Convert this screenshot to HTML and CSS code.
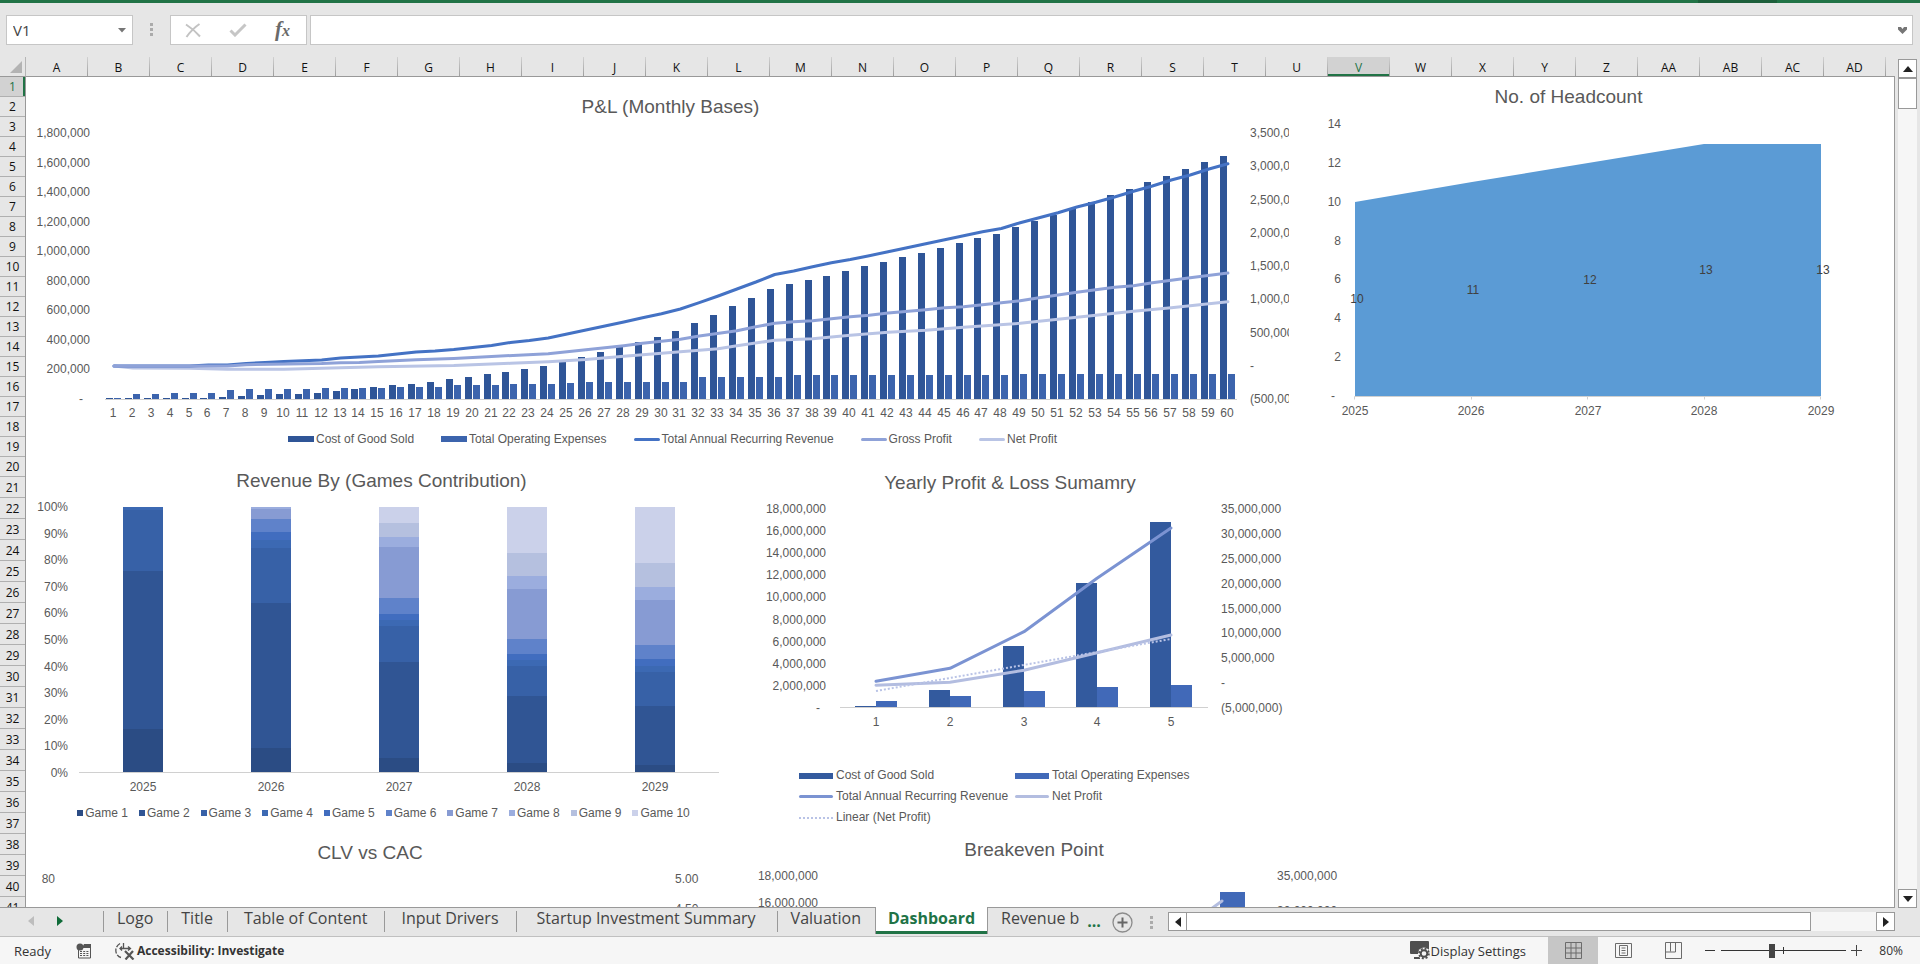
FILE: index.html
```html
<!DOCTYPE html>
<html lang="en">
<head>
<meta charset="utf-8">
<title>Dashboard</title>
<link rel="stylesheet" href="styles.css">
</head>
<body>
<div class="ribbon-edge"><span class="ribbon-notch"></span></div>

<header class="formula-row">
  <div class="name-box">
    <input class="name-input" type="text" value="V1" aria-label="Name box">
    <button class="icon-button" type="button" aria-label="Open name list">
      <svg width="8" height="5" viewBox="0 0 8 5"><path d="M0 0h8L4 4.500z" fill="#767676"/></svg>
    </button>
  </div>
  <svg class="grip" width="3" height="13" viewBox="0 0 3 13" fill="#ababab"><path d="M0 0h3v3H0zM0 5h3v3H0zM0 10h3v3H0z"/></svg>
  <div class="formula-actions">
    <button class="icon-button" type="button" aria-label="Cancel">
      <svg width="16" height="15" viewBox="0 0 16 15" fill="none" stroke="#c3c3c3" stroke-width="2"><path d="M1 1.500C5 4 11 9 15 13.500M14.500 1C10 4 5 9 1.500 14"/></svg>
    </button>
    <button class="icon-button" type="button" aria-label="Enter">
      <svg width="18" height="14" viewBox="0 0 18 14" fill="none" stroke="#c6c6c6" stroke-width="3"><path d="M1.500 7.500L6 12 16.500 1.500"/></svg>
    </button>
    <button class="icon-button fx" type="button" aria-label="Insert function"><i>f</i><i class="fx-x">x</i></button>
  </div>
  <div class="formula-field">
    <input class="formula-input" type="text" aria-label="Formula bar">
    <button class="icon-button" type="button" aria-label="Expand formula bar">
      <svg width="9" height="7" viewBox="0 0 9 7"><path d="M0 0h3l1.500 2L6 0h3v2.500L4.500 7 0 2.500z" fill="#767676"/></svg>
    </button>
  </div>
</header>

<main class="workspace">
  <div class="sheet">
    <div class="corner"><svg width="12" height="12" viewBox="0 0 12 12"><path d="M12 0v12H0z" fill="#b3b3b3"/></svg></div>
    <div class="column-heads" id="column-heads"></div>
    <div class="row-heads" id="row-heads"></div>
    <div class="canvas">
      <div class="chart-row chart-row-top">
        <div class="chart-clip">
          <figure class="chart chart-monthly">
            <figcaption>P&amp;L (Monthly Bases)</figcaption>
            <svg id="monthly" width="1287" height="305" viewBox="27 119 1287 305"></svg>
            <ul class="legend">
              <li><span class="key key-bar c-monthly-cost"></span>Cost of Good Sold</li>
              <li><span class="key key-bar c-monthly-opex"></span>Total Operating Expenses</li>
              <li><span class="key key-line c-monthly-revenue"></span>Total Annual Recurring Revenue</li>
              <li><span class="key key-line c-monthly-gross"></span>Gross Profit</li>
              <li><span class="key key-line c-monthly-net"></span>Net Profit</li>
            </ul>
          </figure>
        </div>
        <figure class="chart chart-headcount">
          <figcaption>No. of Headcount</figcaption>
          <svg id="headcount" width="559" height="320" viewBox="1289 109 559 320"></svg>
        </figure>
      </div>
      <div class="chart-row chart-row-middle">
        <figure class="chart chart-games">
          <figcaption>Revenue By (Games Contribution)</figcaption>
          <svg id="games" width="709" height="308" viewBox="27 493 709 308"></svg>
          <ul class="legend legend-games" id="games-legend"></ul>
        </figure>
        <figure class="chart chart-yearly">
          <figcaption>Yearly Profit &amp; Loss Sumamry</figcaption>
          <svg id="yearly" width="548" height="240" viewBox="736 495 548 240"></svg>
          <ul class="legend legend-yearly">
            <li><span class="key key-bar c-yearly-cost"></span>Cost of Good Sold</li>
            <li><span class="key key-bar c-yearly-opex"></span>Total Operating Expenses</li>
            <li><span class="key key-line c-yearly-revenue"></span>Total Annual Recurring Revenue</li>
            <li><span class="key key-line c-yearly-net"></span>Net Profit</li>
            <li><span class="key key-dots"></span>Linear (Net Profit)</li>
          </ul>
        </figure>
      </div>
      <div class="chart-row">
        <figure class="chart chart-clv">
          <figcaption>CLV vs CAC</figcaption>
          <svg id="clv" width="686" height="60" viewBox="27 865 686 60"></svg>
        </figure>
        <figure class="chart chart-breakeven">
          <figcaption>Breakeven Point</figcaption>
          <svg id="breakeven" width="642" height="60" viewBox="713 862 642 60"></svg>
        </figure>
      </div>
    </div>
  </div>
  <div class="vscroll">
    <button class="scroll-button" type="button" aria-label="Scroll up"><svg width="10" height="6" viewBox="0 0 10 6"><path d="M5 0l5 6H0z" fill="#222"/></svg></button>
    <div class="vthumb"></div>
    <button class="scroll-button scroll-end" type="button" aria-label="Scroll down"><svg width="10" height="6" viewBox="0 0 10 6"><path d="M0 0h10L5 6z" fill="#222"/></svg></button>
  </div>
</main>

<nav class="tab-bar" aria-label="Sheets">
  <div class="tab-arrows">
    <button class="icon-button" type="button" aria-label="Previous sheet"><svg width="6" height="10" viewBox="0 0 6 10"><path d="M6 0v10L0 5z" fill="#bdbdbd"/></svg></button>
    <button class="icon-button" type="button" aria-label="Next sheet"><svg width="6" height="10" viewBox="0 0 6 10"><path d="M0 0l6 5-6 5z" fill="#0f6b38"/></svg></button>
  </div>
  <div class="tabs">
    <button class="tab" type="button">Logo</button>
    <button class="tab" type="button">Title</button>
    <button class="tab tab-long" type="button">Table of Content</button>
    <button class="tab tab-long" type="button">Input Drivers</button>
    <button class="tab tab-wide" type="button">Startup Investment Summary</button>
    <button class="tab" type="button">Valuation</button>
    <button class="tab tab-active" type="button" aria-current="page">Dashboard</button>
    <button class="tab tab-cut" type="button">Revenue b</button>
    <button class="tab-more" type="button" aria-label="More sheets">...</button>
  </div>
  <button class="icon-button add-sheet" type="button" aria-label="New sheet">
    <svg width="21" height="21" viewBox="0 0 21 21" fill="none"><circle cx="10.500" cy="10.500" r="9.500" stroke="#8c8c8c" stroke-width="1.300"/><path d="M10.500 5.500v10M5.500 10.500h10" stroke="#666" stroke-width="2"/></svg>
  </button>
  <svg class="grip tab-grip" width="3" height="13" viewBox="0 0 3 13" fill="#ababab"><path d="M0 0h3v3H0zM0 5h3v3H0zM0 10h3v3H0z"/></svg>
  <div class="hscroll">
    <button class="scroll-button" type="button" aria-label="Scroll left"><svg width="6" height="10" viewBox="0 0 6 10"><path d="M6 0v10L0 5z" fill="#222"/></svg></button>
    <div class="hthumb"></div>
    <button class="scroll-button scroll-end" type="button" aria-label="Scroll right"><svg width="6" height="10" viewBox="0 0 6 10"><path d="M0 0l6 5-6 5z" fill="#222"/></svg></button>
  </div>
</nav>

<footer class="status-bar">
  <span class="ready">Ready</span>
  <button class="icon-button macro" type="button" aria-label="Record macro">
    <svg width="16" height="16" viewBox="0 0 16 16"><path d="M2.500 6v9h12V3" fill="none" stroke="#555"/><path d="M8 1h7v4H6z" fill="#555"/><circle cx="4" cy="4" r="3.500" fill="#555"/><path d="M4 8.500h9M4 10.500h9M4 12.500h9" stroke="#555" stroke-dasharray="2 1.200"/></svg>
  </button>
  <button class="status-button accessibility" type="button">
    <svg width="20" height="18" viewBox="0 0 20 18" fill="none" stroke="#555" stroke-width="1.300"><path d="M5 1.500C1 4 0 8 1.500 11.500c1 2.200 2.500 3.500 4.500 4" stroke-dasharray="5 1.500"/><path d="M8.500 1v5M5 6.500h10M13 4.500l2.500 2-2.500 2M7 4.500l-2 2 2 2"/><path d="M10 9l8.500 8.500M18 9l-7.500 8.500" stroke-width="2.200"/></svg>
    Accessibility: Investigate
  </button>
  <span class="spacer"></span>
  <button class="status-button display" type="button">
    <svg width="20" height="19" viewBox="0 0 20 19"><path d="M1 0h14a1 1 0 0 1 1 1v12H1a1 1 0 0 1-1-1V1a1 1 0 0 1 1-1zM4 16h6v2H4z" fill="#4f4f4f"/><path d="M1 0h17a1 1 0 0 1 1 1v9H1z" fill="#4f4f4f"/><circle cx="14" cy="12.500" r="6" fill="#f6f6f6"/><circle cx="14" cy="12.500" r="3.300" fill="none" stroke="#4f4f4f" stroke-width="2"/><circle cx="14" cy="12.500" r="4.900" fill="none" stroke="#4f4f4f" stroke-width="1.800" stroke-dasharray="2 1.850"/></svg>
    Display Settings
  </button>
  <button class="view view-on" type="button" aria-label="Normal view">
    <svg width="17" height="17" viewBox="0 0 17 17" fill="none" stroke="#6b6b6b"><path d="M.5.5h16v16H.5zM6 .5v16M11 .5v16M.5 6h16M.5 11h16"/></svg>
  </button>
  <button class="view" type="button" aria-label="Page layout">
    <svg width="17" height="17" viewBox="0 0 17 17" fill="none" stroke="#6b6b6b"><path d="M.5 1.500h16v14H.5zM4.500 3.500h8v10h-8zM6.500 6h4M6.500 8.500h4M6.500 11h4"/></svg>
  </button>
  <button class="view" type="button" aria-label="Page break preview">
    <svg width="17" height="17" viewBox="0 0 17 17" fill="none" stroke="#6b6b6b"><path d="M.5.5h16v16H.5zM5.500.5v9M10.500.5v9.500H.5"/></svg>
  </button>
  <button class="icon-button zoom-out" type="button" aria-label="Zoom out"><svg width="10" height="11" viewBox="0 0 10 11"><path d="M0 5.500h10" stroke="#333"/></svg></button>
  <input class="zoom-slider" type="range" min="0" max="100" value="40" aria-label="Zoom">
  <button class="icon-button" type="button" aria-label="Zoom in"><svg width="11" height="11" viewBox="0 0 11 11"><path d="M0 5.500h11M5.500 0v11" stroke="#444"/></svg></button>
  <span class="zoom-value">80%</span>
</footer>
<script src="charts.js"></script>
</body>
</html>
```
FILE: styles.css
```css
* { box-sizing: border-box; }

body {
  margin: 0;
  height: 100vh;
  padding-bottom: 2px;
  display: flex;
  flex-direction: column;
  overflow: hidden;
  background: #fff;
  color: #444;
  font-family: "Open Sans", "Noto Sans", sans-serif;
  font-size: 12px;
}

button, input { font: inherit; color: inherit; }
button { border: 0; padding: 0; background: none; }
figure, ul { margin: 0; padding: 0; }
ul { list-style: none; }
svg { display: block; flex: none; }

.ribbon-edge { flex: none; height: 3px; background: #217346; display: flex; justify-content: flex-end; }
.ribbon-notch { width: 79px; margin-right: 143px; background: #1d5f3b; }

/* Formula bar */
.formula-row {
  flex: none;
  height: 54px;
  padding: 12px 7px 12px 6px;
  display: flex;
  background: #e6e6e6;
}
.name-box, .formula-actions, .formula-field {
  display: flex;
  align-items: center;
  background: #fff;
  border: 1px solid #c6c6c6;
}
.name-box { width: 127px; padding-right: 6px; }
.name-input, .formula-input { flex: 1; min-width: 0; border: 0; outline: 0; background: none; }
.name-input { padding: 0 0 0 6px; font-size: 15px; }
.icon-button { display: flex; align-items: center; justify-content: center; }
.grip { margin: 8px 17px 0; }
.formula-actions { width: 137px; padding: 0 16px 0 14px; justify-content: space-between; margin-right: 3px; }
.fx { font-family: "Liberation Serif", serif; font-size: 21px; font-weight: 700; line-height: 24px; color: #6a6a6a; align-items: baseline; }
.fx-x { font-size: 16px; }
.formula-field { flex: 1; padding-right: 5px; }

/* Grid */
.workspace { flex: 1; min-height: 0; display: flex; background: #e6e6e6; }
.sheet {
  flex: 1;
  min-width: 0;
  display: grid;
  grid-template-columns: 26px minmax(0, 1fr);
  grid-template-rows: 20px minmax(0, 1fr);
  border-bottom: 1px solid #999;
}
.corner {
  display: flex;
  justify-content: flex-end;
  align-items: flex-end;
  padding: 0 3px 3px 0;
  border-right: 1px solid #b5b5b5;
  border-bottom: 1px solid #999;
}
.column-heads { display: flex; overflow: hidden; border-bottom: 1px solid #999; }
.column-head {
  flex: none;
  width: 62px;
  height: 20px;
  padding-top: 2px;
  border-right: 1px solid;
  border-image: linear-gradient(#d4d4d4, #999) 1;
  font-size: 12px;
  line-height: 18px;
  text-align: center;
  color: #111;
}
.column-head.selected { background: #d2d2d2; color: #217346; box-shadow: inset 0 -3px #217346; }
.row-heads { overflow: hidden; border-right: 1px solid #999; }
.row-head {
  height: 20px;
  border-bottom: 1px solid #b0b0b0;
  font-size: 12px;
  line-height: 20px;
  text-align: center;
  color: #111;
}
.row-head.tall { height: 21px; line-height: 22px; }
.row-head.selected { background: #d2d2d2; color: #217346; box-shadow: inset -2px 0 #217346; }
.canvas { overflow: hidden; background: #fff; border-right: 1px solid #999; }

/* Charts */
.chart-row { display: flex; }
.chart-row-top { height: 380px; }
.chart-row-middle { height: 370px; }
.chart-clip { flex: none; width: 1263px; overflow: hidden; }
.chart {
  flex: none;
  font-family: "Liberation Sans", Arial, sans-serif;
  color: #595959;
}
.chart figcaption { font-size: 19px; line-height: 24px; text-align: center; }
.chart-monthly { width: 1287px; padding-top: 18px; margin-left: 1px; }
.chart-headcount { width: 559px; padding-top: 8px; }
.chart-games { width: 709px; padding-top: 12px; margin-left: 1px; }
.chart-yearly { width: 548px; padding-top: 14px; }
.chart-clv { width: 686px; padding-top: 14px; margin-left: 1px; }
.chart-breakeven { width: 642px; padding-top: 11px; }

.chart text { font-size: 12px; fill: #595959; }
.chart .data-label { fill: #404040; }
.axis { stroke: #d0d0d0; fill: none; }
.series { fill: none; stroke-linejoin: round; stroke-linecap: round; stroke-width: 3; }
.trend { fill: none; stroke: #b9c3e6; stroke-width: 2; stroke-dasharray: 2 2; }

.legend { display: flex; justify-content: center; gap: 27px; margin-top: 7px; padding-left: 4px; line-height: 16px; }
.legend li { display: flex; align-items: center; gap: 2px; white-space: nowrap; }
.legend-games { gap: 11px; margin-top: 4px; }
.legend-yearly {
  display: grid;
  grid-template-columns: 216px 1fr;
  gap: 0;
  margin-top: 30px;
  padding-left: 63px;
  line-height: 21px;
}
.legend-yearly li { gap: 3px; }
.key { width: 26px; height: 6px; background: currentColor; }
.key-line { height: 3px; border-radius: 2px; }
.legend-games .key { width: 6px; }
.legend-yearly .key { width: 34px; }
.legend-yearly .key-dots { height: 0; background: none; border-top: 2px dotted #b9c3e6; }

.c-monthly-cost { color: #2f5597; }
.c-monthly-opex { color: #3c64ad; }
.c-monthly-revenue { color: #4472c4; }
.c-monthly-gross { color: #8fa2d8; }
.c-monthly-net { color: #b9c4e5; }
.c-yearly-cost { color: #335a9e; }
.c-yearly-opex { color: #4169b8; }
.c-yearly-revenue { color: #7b93d2; }
.c-yearly-net { color: #b3bde0; }
.bar { fill: currentColor; }
.line { stroke: currentColor; }

/* Scroll bars */
.vscroll { flex: none; width: 19px; margin: 2px 3px 0 3px; display: flex; flex-direction: column; background: #f6f6f6; }
.scroll-button {
  flex: none;
  width: 19px;
  height: 19px;
  display: flex;
  align-items: center;
  justify-content: center;
  background: #fff;
  border: 1px solid #999;
}
.vthumb { height: 31px; background: #fff; border: 1px solid #999; }
.vscroll .scroll-end { margin-top: auto; }
.hscroll { flex: 1; height: 19px; margin: 4px 25px 0 0; display: flex; background: #f6f6f6; }
.hthumb { width: 624px; background: #fff; border: 1px solid #999; border-left: 0; }
.hscroll .scroll-end { margin-left: auto; }

/* Sheet tabs */
.tab-bar { flex: none; height: 29px; display: flex; background: #e6e6e6; border-bottom: 1px solid #c0c0c0; }
.tab-arrows { width: 103px; height: 26px; padding-left: 28px; display: flex; gap: 23px; }
.tabs { display: flex; margin-top: -1px; height: 27px; }
.tab {
  position: relative;
  padding: 0 14px;
  font-size: 16px;
  line-height: 23px;
  white-space: nowrap;
  display: flex;
}
.tab::before { content: ""; position: absolute; left: 0; top: 4px; width: 1px; height: 21px; background: #999; }
.tab-long { padding: 0 17px; }
.tab-wide { padding: 0 21px; }
.tab-active {
  background: #fff;
  color: #217346;
  font-weight: 700;
  padding: 0 12px;
  border: solid #999;
  border-width: 0 1px;
  box-shadow: inset 0 -3px #217346;
}
.tab-active::before, .tab-cut::before { display: none; }
.tab-cut { width: 92px; padding: 0 0 0 13px; overflow: hidden; }
.tab-more { width: 28px; font-size: 16px; font-weight: 700; line-height: 20px; color: #217346; }
.add-sheet { height: 28px; margin-left: 4px; }
.tab-grip { margin: 8px 15px 0 17px; }

/* Status bar */
.status-bar { flex: none; height: 27px; display: flex; align-items: center; background: #f6f6f6; padding-right: 17px; color: #333; }
.ready { margin-left: 14px; width: 62px; font-size: 13px; }
.macro { margin-right: 23px; }
.status-button { display: flex; align-items: center; gap: 2px; font-size: 13px; white-space: nowrap; }
.accessibility { font-weight: 700; font-size: 12px; }
.spacer { flex: 1; }
.display { gap: 1px; margin-right: 22px; }
.view { width: 50px; height: 27px; display: flex; align-items: center; justify-content: center; }
.view-on { background: #c6c6c6; }
.zoom-out { margin: 0 6px 0 7px; }
.zoom-slider {
  appearance: none;
  width: 125px;
  height: 15px;
  margin: 0 5px 0 0;
  background:
    linear-gradient(#333, #333) 50% 50% / 1px 7px no-repeat,
    linear-gradient(#333, #333) 0 50% / 100% 1px no-repeat;
}
.zoom-slider::-webkit-slider-thumb { appearance: none; width: 6px; height: 14px; background: #444; }
.zoom-value { width: 41px; text-align: right; font-size: 12px; }
```
FILE: charts.js
```js
const NS = "http://www.w3.org/2000/svg";

function add(svg, name, attrs, text) {
  const el = document.createElementNS(NS, name);
  for (const key in attrs) el.setAttribute(key, attrs[key]);
  if (text !== undefined) el.textContent = text;
  svg.appendChild(el);
}
const label = (svg, x, y, text, anchor = "middle", cls = "") =>
  add(svg, "text", { x, y: y + 4, "text-anchor": anchor, class: cls }, text);
const bar = (svg, x, top, width, bottom, cls) =>
  add(svg, "rect", { x, y: top, width, height: bottom - top, class: "bar " + cls });
const line = (svg, points, cls) =>
  add(svg, "polyline", { points: points.map(p => p.join(",")).join(" "), class: cls });

function axisLabels(svg, x, top, bottom, names, anchor, dashX) {
  const step = (bottom - top) / (names.length - 1);
  names.forEach((name, i) =>
    label(svg, name === "-" ? dashX : x, Math.round(top + i * step), name, anchor));
}

/* Headers */
const columnHeads = document.getElementById("column-heads");
for (let i = 0; i < 30; i++) {
  const name = i < 26 ? String.fromCharCode(65 + i) : "A" + String.fromCharCode(39 + i);
  const head = document.createElement("div");
  head.className = "column-head" + (name === "V" ? " selected" : "");
  head.textContent = name;
  columnHeads.appendChild(head);
}
const rowHeads = document.getElementById("row-heads");
for (let i = 1; i <= 41; i++) {
  const head = document.createElement("div");
  head.className = "row-head" + (i > 20 ? " tall" : "") + (i === 1 ? " selected" : "");
  head.textContent = i;
  rowHeads.appendChild(head);
}

/* Monthly profit and loss */
{
  const svg = document.getElementById("monthly");
  const center = n => 114 + (n - 1) * 18.88;
  const cost = [398,398,398,398,398,398,397,396,395,394,394,393,391,389,387,385,384,382,379,377,
    374,372,369,366,361,357,352,346,342,337,331,323,315,306,298,289,284,280,276,271,
    266,262,257,253,248,243,238,234,227,221,215,208,202,195,189,182,176,169,162,156];
  const opex = [398,394,394,393,393,393,390,389,389,389,389,388,388,388,388,387,387,387,385,385,
    385,384,384,384,383,382,382,382,382,382,382,377,377,377,377,377];
  while (opex.length < 48) opex.push(375);
  while (opex.length < 60) opex.push(374);

  line(svg, [[105, 399.5], [1237, 399.5]], "axis");
  for (let n = 1; n <= 60; n++) {
    const x = Math.round(center(n));
    bar(svg, x - 8, cost[n - 1], 7, 399, "c-monthly-cost");
    bar(svg, x, opex[n - 1], 7, 399, "c-monthly-opex");
    label(svg, x - 1, 413, n);
  }
  const at = points => points.map(([n, y]) => [center(n).toFixed(1), y]);
  line(svg, at([[1,366],[2,368],[5,368.3],[7,369.3],[10,369.3],[12,368.3],[15,366.7],[19,365.5],
    [22,363.3],[24,361.7],[26,359.5],[28,356.3],[31,351.7],[33,348.7],[34,345.7],[36,340.3],[38,338.7],
    [40,335.3],[42,332.3],[44,330.3],[46,327.3],[49,323.3],[51,319.3],[53,315.3],[55,311.3],[57,307.7],[60,301.7]]),
    "series line c-monthly-net");
  line(svg, at([[1,366],[2,366],[5,366],[6,365],[7,365],[8,363.5],[9,362.5],[10,361.5],[12,360],[13,358],
    [15,356],[16,354],[17,352],[18,351],[19,349.5],[20,347.5],[21,345.5],[22,342.5],[23,340.5],[24,338],
    [25,334],[26,330],[27,326],[28,322],[29,317.7],[30,313.7],[31,309],[32,302.7],[33,296],[34,289],
    [35,282],[36,274.5],[37,271],[38,266.7],[39,262.7],[40,259.5],[41,255.7],[42,251.7],[43,247.7],
    [44,243.7],[45,239.7],[46,235.7],[47,231.7],[48,228.5],[49,222.7],[50,217.7],[51,212.7],[52,207],
    [53,202.3],[54,197],[55,191.3],[56,186],[57,180],[58,175],[59,169],[60,163.7]]),
    "series line c-monthly-revenue");
  line(svg, at([[1,366],[7,366],[8,364.7],[12,363.5],[13,362.7],[14,362.5],[15,361.5],[17,359.7],[19,358.5],
    [21,356.5],[24,353.7],[26,349.7],[28,345.7],[29,343.3],[31,339.3],[32,336],[34,330.7],[35,326.7],
    [36,323.3],[37,321.7],[38,320.7],[40,316.7],[41,315.3],[42,313],[44,309.7],[45,307.7],[46,306.7],
    [48,302.7],[49,300.7],[50,297.7],[52,292.3],[54,287.3],[55,285.7],[56,282.7],[58,277.7],[60,273]]),
    "series line c-monthly-gross");

  axisLabels(svg, 90, 133, 399, ["1,800,000","1,600,000","1,400,000","1,200,000","1,000,000",
    "800,000","600,000","400,000","200,000","-"], "end", 83);
  axisLabels(svg, 1250, 133, 399, ["3,500,000","3,000,000","2,500,000","2,000,000","1,500,000",
    "1,000,000","500,000","-","(500,000)"], "start", 1250);
}

/* Headcount */
{
  const svg = document.getElementById("headcount");
  add(svg, "path", { d: "M1355 396V202L1472 182 1588 163 1704 144H1821V396z", fill: "#5b9bd5" });
  add(svg, "path", { class: "axis", d: "M1354.5 399.5v-3H1820.5v3M1471.5 396.500v3M1587.5 396.500v3M1704.5 396.500v3" });
  axisLabels(svg, 1341, 124, 396, ["14","12","10","8","6","4","2","-"], "end", 1335);
  [[1355, 299, 10], [1471, 290, 11], [1588, 280, 12], [1704, 270, 13], [1821, 270, 13]].forEach(([x, y, v], i) => {
    label(svg, x, 411, 2025 + i);
    label(svg, x + 2, y, v, "middle", "data-label");
  });
}

/* Revenue by game */
{
  const svg = document.getElementById("games");
  const colors = ["#2b4c84","#305594","#3761a7","#3c69b3","#416dbf","#5f82ca","#879bd3","#9badde","#b5c0df","#cbd1ea"];
  /* upper edge of each game's segment, from game 1 upwards */
  const tops = [
    [729, 571, 510, 507],
    [748, 603, 548, 540, 532, 519, 509, 507],
    [758, 662, 626, 620, 614, 598, 547, 537, 523, 507],
    [763, 696, 666, 660, 654, 639, 589, 576, 553, 507],
    [765, 706, 672, 666, 659, 645, 600, 587, 563, 507]
  ];
  line(svg, [[79, 772.5], [719, 772.5]], "axis");
  tops.forEach((edges, year) => {
    const x = 123 + year * 128;
    let bottom = 772;
    edges.forEach((top, game) => {
      add(svg, "rect", { x, y: top, width: 40, height: bottom - top, fill: colors[game] });
      bottom = top;
    });
    label(svg, x + 20, 787, 2025 + year);
  });
  axisLabels(svg, 68, 507, 773, ["100%","90%","80%","70%","60%","50%","40%","30%","20%","10%","0%"], "end");
  const legend = document.getElementById("games-legend");
  colors.forEach((color, i) => {
    const item = document.createElement("li");
    const key = document.createElement("span");
    key.className = "key";
    key.style.background = color;
    item.append(key, "Game " + (i + 1));
    legend.appendChild(item);
  });
}

/* Yearly profit and loss */
{
  const svg = document.getElementById("yearly");
  const xs = [876, 950, 1024, 1097, 1171];
  line(svg, [[840, 707.5], [1208, 707.5]], "axis");
  [706, 690, 646, 583, 522].forEach((top, i) => bar(svg, xs[i] - 21, top, 21, 707, "c-yearly-cost"));
  [701, 696, 691, 687, 685].forEach((top, i) => bar(svg, xs[i], top, 21, 707, "c-yearly-opex"));
  const series = ys => ys.map((y, i) => [xs[i], y]);
  line(svg, series([681.3, 668.3, 631.7, 578.3, 528]), "series line c-yearly-revenue");
  line(svg, series([685.3, 682.3, 670.3, 652.7, 635]), "series line c-yearly-net");
  line(svg, [[876, 691], [1171, 639]], "trend");
  xs.forEach((x, i) => label(svg, x, 722, i + 1));
  axisLabels(svg, 826, 509, 708, ["18,000,000","16,000,000","14,000,000","12,000,000","10,000,000",
    "8,000,000","6,000,000","4,000,000","2,000,000","-"], "end", 820);
  axisLabels(svg, 1221, 509, 708, ["35,000,000","30,000,000","25,000,000","20,000,000","15,000,000",
    "10,000,000","5,000,000","-","(5,000,000)"], "start", 1221);
}

/* Charts that continue below the fold */
{
  const clv = document.getElementById("clv");
  label(clv, 55, 879, "80", "end");
  label(clv, 675, 879, "5.00", "start");
  label(clv, 675, 909, "4.50", "start");

  const svg = document.getElementById("breakeven");
  bar(svg, 1220, 892, 25, 930, "c-yearly-opex");
  line(svg, [[1200, 917], [1222, 901]], "series line c-yearly-net");
  label(svg, 818, 876, "18,000,000", "end");
  label(svg, 818, 903, "16,000,000", "end");
  label(svg, 1277, 876, "35,000,000", "start");
  label(svg, 1277, 911, "30,000,000", "start");
}
```
